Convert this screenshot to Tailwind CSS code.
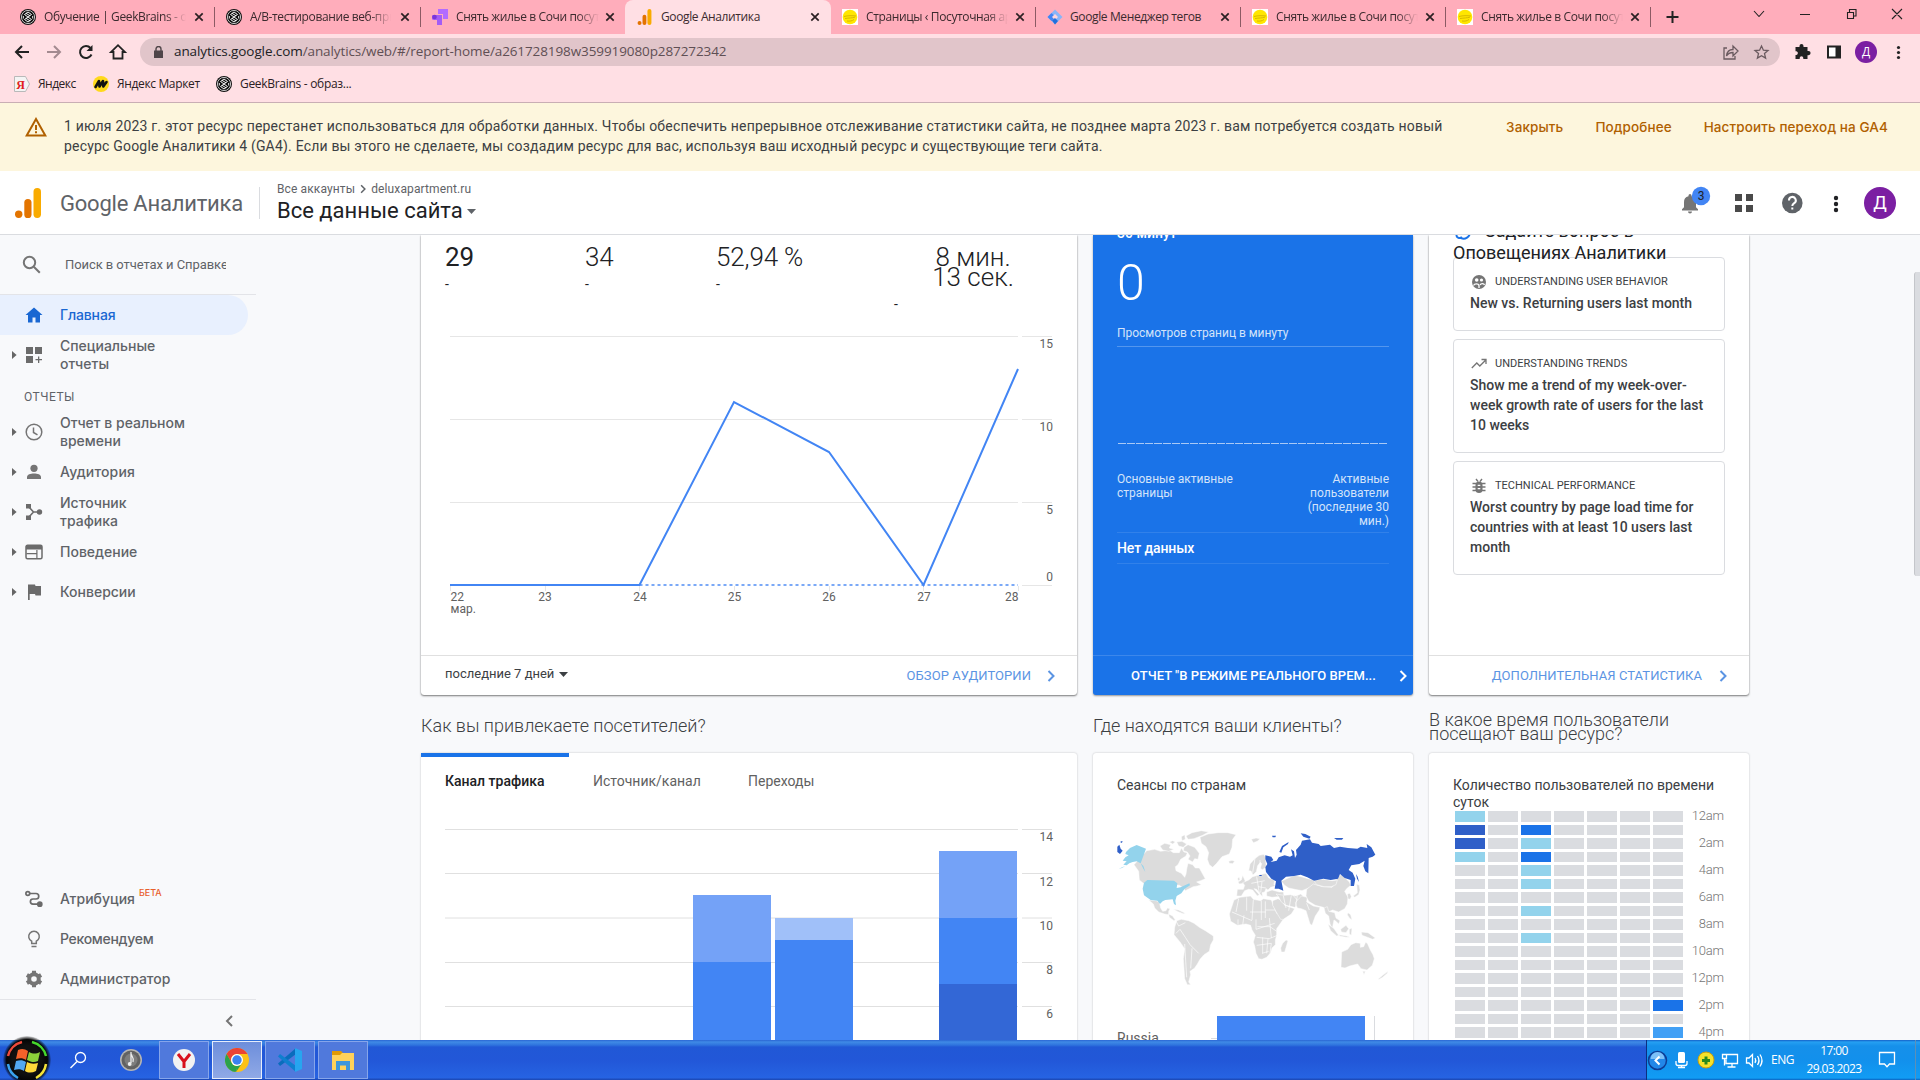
<!DOCTYPE html>
<html lang="ru">
<head>
<meta charset="utf-8">
<title>Google Аналитика</title>
<script src="https://cdn.jsdelivr.net/npm/@tailwindcss/browser@4"></script>
</head>
<body class="w-[1920px] h-[1080px] overflow-hidden flex flex-col bg-[#f8f9fb] font-['Roboto',sans-serif] text-[#202124]">

<!-- Shared icons -->
<svg width="0" height="0" class="absolute">
  <defs>
    <symbol id="gb" viewBox="0 0 16 16"><circle cx="8" cy="8" r="8" fill="#111"/><circle cx="8" cy="8" r="6.600" fill="none" stroke="#eee" stroke-width=".8"/><g fill="none" stroke="#f4f4f4" stroke-width="1"><path d="M8 3 4.500 5.500 8 8l-3.500 2.500L8 13M8 3l3.500 2.500L8 8l3.500 2.500L8 13M6 4.300l4 2.500M6 9.300l4 2.500M3.300 7v2.500M12.700 7v2.500"/></g></symbol>
    <symbol id="deluxe" viewBox="0 0 16 16"><path fill="#fff" d="M0 0h16v16H0z"/><circle cx="8" cy="8" r="7.300" fill="#ffe600"/><path d="M2 7.500c4-1 8-1 12-.5M3 9.500c4-.6 7-.4 10-1.400M5 12c3 .4 5 0 7-1.500" stroke="#d8b800" stroke-width="1" fill="none"/></symbol>
    <symbol id="x" viewBox="0 0 10 10"><path d="m1.300 1.300 7.400 7.400m0-7.400-7.400 7.400" stroke="#2b2023" stroke-width="1.700" fill="none"/></symbol>
    <symbol id="ga" viewBox="0 0 26 30"><rect x="18.500" y="0" width="7.500" height="30" rx="3.700" fill="#f9ab00"/><rect x="9.300" y="11" width="7.200" height="19" rx="3.600" fill="#e37400"/><circle cx="3.700" cy="26.200" r="3.700" fill="#e37400"/></symbol>
    <symbol id="arr" viewBox="0 0 5 8"><path d="M0 0v8l4.600-4z" fill="#666"/></symbol>
    <symbol id="chev" viewBox="0 0 8 12"><path d="m1.500 1 5 5-5 5" fill="none" stroke="currentColor" stroke-width="2"/></symbol>
  </defs>
</svg>

<!-- Tab strip -->
<header class="h-[34px] shrink-0 bg-[#ffadbb] flex text-[12px] leading-[34px] text-[#3b2a2e] font-['Open_Sans',sans-serif] tracking-[-0.38px] whitespace-nowrap">
  <div class="w-[215px] pl-5 flex items-center"><svg class="size-4 shrink-0"><use href="#gb"/></svg><span class="ml-2 w-[142px] overflow-hidden [mask-image:linear-gradient(to_right,#000_85%,transparent)]">Обучение | GeekBrains - обра</span><svg class="size-[10px] ml-2 shrink-0"><use href="#x"/></svg><i class="ml-auto w-px h-5 bg-[#8c5a64]"></i></div>
  <div class="w-[206px] pl-[11px] flex items-center"><svg class="size-4 shrink-0"><use href="#gb"/></svg><span class="ml-2 w-[141px] overflow-hidden [mask-image:linear-gradient(to_right,#000_85%,transparent)]">A/B-тестирование веб-прило</span><svg class="size-[10px] ml-[9px] shrink-0"><use href="#x"/></svg><i class="ml-auto w-px h-5 bg-[#8c5a64]"></i></div>
  <div class="w-[204px] pl-[11px] flex items-center bg-[#ffadbb]"><svg class="size-4 shrink-0" viewBox="0 0 16 16"><path d="M6 0h10v10h-5V5H6z" fill="#b36bff"/><path d="M4 6h6v10H5v-5H2A2.500 2.500 0 0 1 2 6z" fill="#a35cf5"/><circle cx="2.500" cy="8" r="2.300" fill="#7a35d8"/></svg><span class="ml-2 w-[143px] overflow-hidden [mask-image:linear-gradient(to_right,#000_85%,transparent)]">Снять жилье в Сочи посуточ</span><svg class="size-[10px] ml-[6px] shrink-0"><use href="#x"/></svg></div>
  <div class="w-[206px] flex bg-[#ffdfe4] rounded-t-[8px]"><div class="pl-3 w-full flex items-center"><svg class="w-[15px] h-4 shrink-0"><use href="#ga"/></svg><span class="ml-[9px] w-[145px]">Google Аналитика</span><svg class="size-[10px] ml-[4px] shrink-0"><use href="#x"/></svg></div></div>
  <div class="w-[205px] pl-[11px] flex items-center rounded-bl-[8px]"><svg class="size-4 shrink-0"><use href="#deluxe"/></svg><span class="ml-2 w-[142px] overflow-hidden [mask-image:linear-gradient(to_right,#000_85%,transparent)]">Страницы ‹ Посуточная аренда</span><svg class="size-[10px] ml-[7px] shrink-0"><use href="#x"/></svg><i class="ml-auto w-px h-5 bg-[#8c5a64]"></i></div>
  <div class="w-[205px] pl-[11px] flex items-center"><svg class="size-4 shrink-0" viewBox="0 0 16 16"><path d="M8 .5 15.500 8 8 15.500.5 8z" fill="#8ab4f8"/><path d="M8 .5.5 8 4.500 12l4-4-4-4z" fill="#4285f4"/><path d="m8 5 3 3-3 3-3-3z" fill="#ffd5dc"/><path d="m5 11.500 3-2.500 3 3-3 3.500z" fill="#246fdb"/></svg><span class="ml-[7px] w-[143px]">Google Менеджер тегов</span><svg class="size-[10px] ml-[7px] shrink-0"><use href="#x"/></svg><i class="ml-auto w-px h-5 bg-[#8c5a64]"></i></div>
  <div class="w-[205px] pl-[11px] flex items-center"><svg class="size-4 shrink-0"><use href="#deluxe"/></svg><span class="ml-2 w-[142px] overflow-hidden [mask-image:linear-gradient(to_right,#000_85%,transparent)]">Снять жилье в Сочи посуточ</span><svg class="size-[10px] ml-[7px] shrink-0"><use href="#x"/></svg><i class="ml-auto w-px h-5 bg-[#8c5a64]"></i></div>
  <div class="w-[205px] pl-[11px] flex items-center"><svg class="size-4 shrink-0"><use href="#deluxe"/></svg><span class="ml-2 w-[142px] overflow-hidden [mask-image:linear-gradient(to_right,#000_85%,transparent)]">Снять жилье в Сочи посуточ</span><svg class="size-[10px] ml-[7px] shrink-0"><use href="#x"/></svg><i class="ml-auto w-px h-5 bg-[#8c5a64]"></i></div>
  <svg class="w-[269px] h-[34px]" viewBox="1651 0 269 34" fill="none" stroke="#222"><path d="M1666.500 17h12M1672.500 11v12" stroke-width="2"/><path d="m1754 11 5 5.500 5-5.500M1800 14.500h10M1847.500 12.500h6v6h-6zM1849.500 12.500v-3h6.500v6.500h-2.500M1892 9l10 10m0-10-10 10" stroke-width="1.100"/></svg>
</header>

<!-- Toolbar -->
<div class="h-[36px] shrink-0 bg-[#ffdfe4] flex items-center font-['Open_Sans',sans-serif]">
  <svg class="w-[140px] h-9" viewBox="0 34 140 36" fill="none" stroke="#222" stroke-width="2"><path d="M29 52H16.500m5.500-6-6 6 6 6"/><path d="M47 52h12.500m-5.500-6 6 6-6 6" stroke="#a38a90"/><path d="M91.500 54.500A6 6 0 1 1 90.500 48"/><path d="M92.500 45v6h-6z" fill="#222" stroke="none"/><path d="M113.500 58.500v-6.500H111l7-6.800 7 6.800h-2.500v6.500z" stroke-width="1.800"/></svg>
  <div class="w-[1640px] h-7 rounded-full bg-[#e1c5ca] flex items-center text-[#5f4f54] whitespace-nowrap">
    <svg class="w-[9px] h-[12px] ml-[14px] -mt-px" viewBox="0 0 9 12"><path d="M0 4.500h9V12H0z" fill="#4f4549"/><path d="M2 5V3a2.500 2.500 0 0 1 5 0v2" fill="none" stroke="#4f4549" stroke-width="1.400"/></svg>
    <span class="ml-[11px] text-[13.500px] leading-5 -mt-[2px] tracking-[-0.1px]"><span class="text-[#202124]">analytics.google.com</span>/analytics/web/#/report-home/a261728198w359919080p287272342</span>
    <svg class="w-[60px] h-7 ml-auto" viewBox="1720 38 60 28" fill="none" stroke="#6a5a5f" stroke-width="1.300"><path d="M1727 48h-3v11h11v-3M1726.500 56c.5-4.500 3-6.500 6.500-6.500V46l5 5-5 5v-3.500c-3 0-5 1-6.500 3.500z"/><path d="m1761.500 46 1.900 4.200 4.600.4-3.500 3 1.100 4.500-4.100-2.400-4.100 2.400 1.100-4.500-3.500-3 4.600-.4z"/></svg>
  </div>
  <svg class="w-[140px] h-9" viewBox="1780 34 140 36"><path d="M1795 48h4v-1a2 2 0 0 1 4 0v1h4v4h1a2 2 0 0 1 0 4.200h-1v3.800h-4.200v-1a1.800 1.800 0 0 0-3.600 0v1h-4.200v-4h1a2 2 0 0 0 0-3.800h-1z" fill="#222" transform="translate(.5 -1)"/><path d="M1828 46.500h12v11h-12z" fill="#fff" stroke="#222" stroke-width="2"/><path d="M1835.500 46.500h4.500v11h-4.500z" fill="#222"/><circle cx="1866" cy="52" r="11" fill="#7b1fa2"/><text x="1866" y="56" text-anchor="middle" font-size="12" fill="#fff">Д</text><g fill="#222"><circle cx="1898.500" cy="47.500" r="1.600"/><circle cx="1898.500" cy="52.500" r="1.600"/><circle cx="1898.500" cy="57.500" r="1.600"/></g></svg>
</div>

<!-- Bookmarks -->
<div class="h-[33px] pb-[5px] shrink-0 bg-[#ffdfe4] border-b border-[#c9aeb4] flex items-center pl-[14px] text-[12px] text-[#2b2023] font-['Open_Sans',sans-serif] tracking-[-0.35px] whitespace-nowrap">
  <svg class="w-[16px] h-4" viewBox="0 0 16 16"><path d="M.5.5h11l4 7.500-4 7.500H.5z" fill="#f4f4f4" stroke="#b9b9b9"/><text x="6.500" y="12.500" text-anchor="middle" font-size="12" font-weight="700" fill="#e02020" font-family="Liberation Serif, serif">Я</text></svg><span class="ml-2 w-[55px] tracking-[-0.5px]">Яндекс</span>
  <svg class="size-4" viewBox="0 0 16 16"><circle cx="8" cy="8" r="8" fill="#ffd91c"/><path d="M2.500 11 6 5l.5 5.500L10 5l.3 5.500L13.500 6" stroke="#111" stroke-width="2.600" stroke-linecap="round" stroke-linejoin="round" fill="none"/></svg><span class="ml-2 w-[99px]">Яндекс Маркет</span>
  <svg class="size-4"><use href="#gb"/></svg><span class="ml-2 tracking-[-0.3px]">GeekBrains - образ...</span>
</div>

<!-- Notice banner -->
<section class="h-[68px] shrink-0 bg-[#fdf6dd] flex pl-[25px] pr-8">
  <svg class="w-[22px] h-5 mt-[14px]" viewBox="0 0 22 20"><path d="M11 2 20.300 18.500H1.700z" fill="none" stroke="#b06000" stroke-width="2"/><path d="M10 8h2v5h-2zM10 14.300h2v2h-2z" fill="#b06000"/></svg>
  <p class="ml-[17px] mt-[13px] text-[14px] leading-5 tracking-[0.195px] text-[#3c4043] whitespace-nowrap">1 июля 2023 г. этот ресурс перестанет использоваться для обработки данных. Чтобы обеспечить непрерывное отслеживание статистики сайта, не позднее марта 2023 г. вам потребуется создать новый<br>ресурс Google Аналитики 4 (GA4). Если вы этого не сделаете, мы создадим ресурс для вас, используя ваш исходный ресурс и существующие теги сайта.</p>
  <div class="ml-auto mt-[14px] flex gap-8 text-[13.500px] leading-5 tracking-[0.1px] text-[#b06000] font-medium font-['Inter',sans-serif] whitespace-nowrap"><span>Закрыть</span><span>Подробнее</span><span>Настроить переход на GA4</span></div>
</section>

<!-- App bar -->
<section class="h-[64px] shrink-0 bg-white border-b border-[#dadce0] flex items-center pl-[15px] pr-6">
  <svg class="w-[26px] h-[30px]"><use href="#ga"/></svg>
  <div class="ml-[19px] mt-0.5 w-[199px] text-[22px] leading-[30px] text-[#5f6368] tracking-[-0.22px] whitespace-nowrap">Google Аналитика</div>
  <div class="w-px h-8 bg-[#dadce0]"></div>
  <div class="ml-[17px]">
    <div class="flex items-center text-[12px] leading-4 text-[#5f6368] tracking-[0.12px]"><span>Все аккаунты</span><svg class="w-[6px] h-[10px] mx-[5px]"><use href="#chev"/></svg><span>deluxapartment.ru</span></div>
    <div class="flex items-center text-[22px] leading-[26px] mt-px"><span>Все данные сайта</span><svg class="w-[9px] h-[5px] ml-[4px]" viewBox="0 0 9 5"><path d="M0 0h9L4.500 5z" fill="#5f6368"/></svg></div>
  </div>
  <svg class="w-[240px] h-[63px] ml-auto -mr-6" viewBox="1680 171 240 63"><path d="M1682 210.500v-1.300l2-2v-5a6 6 0 0 1 4.500-6v-.7a1.500 1.500 0 0 1 3 0v.7a6 6 0 0 1 4.500 6v5l2 2v1.300zM1688 211.500h4a2 2 0 0 1-4 0z" fill="#757575"/><circle cx="1701" cy="196" r="9.200" fill="#4285f4"/><text x="1701" y="200.300" text-anchor="middle" font-size="12" fill="#202124">3</text><path d="M1735 194h7v7h-7zM1746 194h7v7h-7zM1735 205h7v7h-7zM1746 205h7v7h-7z" fill="#4a4a4a"/><circle cx="1792.300" cy="203" r="10.300" fill="#5f6368"/><path d="M1789 200.500a3.400 3.400 0 1 1 5.200 2.700c-1.200.8-1.900 1.300-1.900 2.800" fill="none" stroke="#fff" stroke-width="2"/><path d="M1791.300 207.500h2v2h-2z" fill="#fff"/><g fill="#202124"><circle cx="1836" cy="198" r="2.200"/><circle cx="1836" cy="204" r="2.200"/><circle cx="1836" cy="210" r="2.200"/></g><circle cx="1880" cy="203" r="16" fill="#7b1fa2"/><text x="1880" y="209" text-anchor="middle" font-size="18" fill="#fff">Д</text></svg>
</section>

<!-- Body -->
<div class="h-[805px] shrink-0 flex overflow-hidden">
  <!-- Sidebar -->
  <nav class="w-[256px] flex flex-col text-[14px] leading-[18px] font-medium text-[#5f6368] font-['Inter',sans-serif]">
    <div class="h-[60px] border-b border-[#e3e4e8] flex items-center pl-[22px]">
      <svg class="size-[19px]" viewBox="0 0 19 19" fill="none" stroke="#757575" stroke-width="2"><circle cx="7.500" cy="7.500" r="5.700"/><path d="m11.800 11.800 6 6"/></svg>
      <span class="ml-6 w-[161px] overflow-hidden whitespace-nowrap text-[13px] font-normal tracking-[-0.07px] font-['Roboto',sans-serif]">Поиск в отчетах и Справке</span>
    </div>
    <div class="h-10 w-[248px] bg-[#e8f0fe] rounded-r-full flex items-center pl-[25px] text-[#1967d2] tracking-[-0.15px]"><svg class="size-[18px]" viewBox="0 0 18 18"><path d="M9 1.500.5 9H3v7.500h4.500v-5h3v5H15V9h2.500z" fill="#1967d2"/></svg><span class="ml-[17px]">Главная</span></div>
    <div class="h-10 flex items-center pl-3"><svg class="w-[5px] h-2"><use href="#arr"/></svg><svg class="size-[18px] ml-2" viewBox="0 0 18 18"><path d="M1 1h7v7H1zM10 1h7v7h-7zM1 10h7v7H1zM13 10.500h1.300V13H17v1.300h-2.700V17H13v-2.700h-2.500V13H13z" fill="#6b6b6b"/></svg><span class="ml-[17px] w-[130px]">Специальные отчеты</span></div>
    <div class="h-[37px] pl-6 pt-[13px] text-[12px] font-normal tracking-[0.5px] font-['Roboto',sans-serif]">ОТЧЕТЫ</div>
    <div class="h-10 flex items-center pl-3"><svg class="w-[5px] h-2"><use href="#arr"/></svg><svg class="size-[18px] ml-2" viewBox="0 0 18 18" fill="none" stroke="#757575" stroke-width="1.500"><circle cx="9" cy="9" r="7.800"/><path d="M8.500 4.500v5l4 2.300"/></svg><span class="ml-[17px] w-[130px]">Отчет в реальном времени</span></div>
    <div class="h-10 flex items-center pl-3"><svg class="w-[5px] h-2"><use href="#arr"/></svg><svg class="size-[18px] ml-2" viewBox="0 0 18 18" fill="#757575"><circle cx="9" cy="5.300" r="3.600"/><path d="M2 16v-2c0-2.500 3.500-3.500 7-3.500s7 1 7 3.500v2z"/></svg><span class="ml-[17px] tracking-[0.15px]">Аудитория</span></div>
    <div class="h-10 flex items-center pl-3"><svg class="w-[5px] h-2"><use href="#arr"/></svg><svg class="size-[18px] ml-2" viewBox="0 0 18 18" fill="#6b6b6b"><path d="M1 1h5v4.500H1zM1 12.500h5V17H1z"/><circle cx="14.500" cy="9" r="2.700"/><path d="m3.500 3.500 5 5.500-5 5.500M8.500 9h6" fill="none" stroke="#6b6b6b" stroke-width="1.600"/></svg><span class="ml-[17px] w-[100px]">Источник трафика</span></div>
    <div class="h-10 flex items-center pl-3"><svg class="w-[5px] h-2"><use href="#arr"/></svg><svg class="size-[18px] ml-2" viewBox="0 0 18 18"><rect x="1" y="2.300" width="16" height="13.400" rx="1.500" fill="none" stroke="#6b6b6b" stroke-width="1.500"/><path d="M1 2h16v4.500H1zM1.500 10h10v1.300h-10zM11.300 7h1.200v8.500h-1.200z" fill="#6b6b6b"/></svg><span class="ml-[17px]">Поведение</span></div>
    <div class="h-10 flex items-center pl-3"><svg class="w-[5px] h-2"><use href="#arr"/></svg><svg class="size-[18px] ml-2" viewBox="0 0 18 18"><path d="M3 1.500h7l.5 1.500H16v9.500h-5.500L10 11H4.700v6H3z" fill="#6b6b6b"/></svg><span class="ml-[17px]">Конверсии</span></div>

    <div class="mt-auto h-10 flex items-center pl-[25px]"><svg class="size-[18px]" viewBox="0 0 18 18" fill="none" stroke="#6b6b6b" stroke-width="1.700"><circle cx="2.800" cy="3.500" r="1.900"/><path d="M5 3.500h6a2.700 2.700 0 0 1 0 5.500H8a2.600 2.600 0 0 0 0 5.200h5"/><circle cx="14.800" cy="14.200" r="2" fill="#6b6b6b"/></svg><span class="ml-[17px]">Атрибуция</span><span class="ml-1 -mt-[12px] text-[9px] leading-3 font-medium text-[#e8602c]">БЕТА</span></div>
    <div class="h-10 flex items-center pl-[25px]"><svg class="size-[18px]" viewBox="0 0 18 18" fill="none" stroke="#757575" stroke-width="1.500"><path d="M6.700 13.500v-2.200A5.300 5.300 0 1 1 11.300 11.300v2.200zM6.500 16.500h5"/></svg><span class="ml-[17px] tracking-[-0.3px]">Рекомендуем</span></div>
    <div class="h-10 flex items-center pl-[25px]"><svg class="size-[18px]" viewBox="0 0 18 18"><circle cx="9" cy="9" r="4.800" fill="none" stroke="#757575" stroke-width="4"/><path d="M7 .8h4v3H7zM7 14.200h4v3H7z" fill="#757575"/><path d="M7 .8h4v3H7zM7 14.200h4v3H7z" fill="#757575" transform="rotate(60 9 9)"/><path d="M7 .8h4v3H7zM7 14.200h4v3H7z" fill="#757575" transform="rotate(120 9 9)"/></svg><span class="ml-[17px]">Администратор</span></div>
    <div class="h-[41px] border-t border-[#e3e4e8] flex items-center pl-[225px]"><svg class="w-[8px] h-[12px] mt-0.5" viewBox="0 0 8 12"><path d="M7 1 2 6l5 5" fill="none" stroke="#757575" stroke-width="2"/></svg></div>
  </nav>

  <!-- Report home -->
  <main class="ml-[165px] w-[1328px] shrink-0">
    <div class="flex gap-4 h-[460px]">
      <section class="w-[656px] bg-white rounded-b-[3px] shadow-[0_1px_2px_rgba(0,0,0,.5),0_0_1px_rgba(0,0,0,.3)] flex flex-col">
        <div class="pt-3 h-[92px] pl-6 flex text-[26px] leading-5 font-light">
          <div class="w-[140px]"><div class="font-normal tracking-[-0.2px]">29</div><div class="mt-[9px] text-[14px] leading-4 font-normal">-</div></div>
          <div class="w-[131px]"><div class="tracking-[-0.2px]">34</div><div class="mt-[9px] text-[14px] leading-4 font-normal">-</div></div>
          <div class="w-[178px]"><div class="tracking-[-0.15px]">52,94 %</div><div class="mt-[9px] text-[14px] leading-4 font-normal">-</div></div>
          <div class="w-[158px]"><div class="text-center">8 мин.<br>13 сек.</div><div class="mt-[9px] text-[14px] leading-4 font-normal">-</div></div>
        </div>
        <svg class="w-[656px] h-[328px]" viewBox="421 327 656 328" font-size="12" fill="#616161">
          <path d="M450 336.500h568M1022 336.500h30M450 419.500h568M1022 419.500h30M450 502.500h568M1022 502.500h30M1022 585.500h30M450.500 586v5M545.500 586v5M639.500 586v5M734.500 586v5M829.500 586v5M923.500 586v5M1018.500 586v5" stroke="#e6e6e6"/>
          <path d="M639.500 585H1018" stroke="#4285f4" stroke-opacity=".7" stroke-width="2" stroke-dasharray="3 3"/>
          <path d="M450 585h189.500L734 402l95 50 94.500 133L1018 369" fill="none" stroke="#4285f4" stroke-width="2"/>
          <g text-anchor="end"><text x="1053" y="348">15</text><text x="1053" y="431">10</text><text x="1053" y="514">5</text><text x="1053" y="581">0</text><text x="1018.500" y="601">28</text></g>
          <text x="450.500" y="601">22</text><text x="450.500" y="613">мар.</text>
          <g text-anchor="middle"><text x="545" y="601">23</text><text x="640" y="601">24</text><text x="734.500" y="601">25</text><text x="829" y="601">26</text><text x="924" y="601">27</text></g>
        </svg>
        <div class="h-10 border-t border-[#e0e0e0] flex items-center justify-between pl-6 pr-[22px]">
          <span class="flex items-center text-[13px] text-[#3c4043] -mt-[3px]">последние 7 дней<svg class="w-[9px] h-[5px] ml-[5px]" viewBox="0 0 9 5"><path d="M0 0h9L4.500 5z" fill="#3c4043"/></svg></span>
          <span class="flex items-center text-[13px] text-[#5b94e3] tracking-[0.06px]">ОБЗОР АУДИТОРИИ<svg class="w-[8px] h-[12px] ml-[16px]"><use href="#chev"/></svg></span>
        </div>
      </section>

      <section class="w-[320px] bg-[#1a73e8] rounded-b-[3px] shadow-[0_1px_2px_rgba(0,0,0,.4)] flex flex-col text-white">
        <div class="h-[420px] px-6 flex flex-col">
          <div class="h-4 -mt-[10px] text-[14px] leading-4 font-medium">30 минут</div>
          <div class="mt-[14px] h-[56px] text-[50px] leading-[56px] font-light">0</div>
          <div class="mt-[16px] h-[20px] border-b border-white/25 text-[12px] leading-3 text-[#d3e3fa] tracking-[-0.03px]">Просмотров страниц в минуту</div>
          <svg class="w-[272px] h-[97px] shrink-0" viewBox="1117 346 272 97"><path d="M1118 442.500h270" stroke="#a9c9f5" stroke-dasharray="8 1"/></svg>
          <div class="mt-[28px] h-[61px] border-b border-white/10 flex justify-between text-[12px] leading-[14px] text-[#d3e3fa]"><div class="w-[130px]">Основные активные страницы</div><div class="w-[90px] text-right">Активные пользователи (последние 30 мин.)</div></div>
          <div class="h-[31px] border-b border-white/10 text-[14px] leading-[30px] font-medium tracking-[-0.1px]">Нет данных</div>
        </div>
        <div class="h-10 border-t border-white/15 flex items-center pl-[38px] text-[13px] font-medium whitespace-nowrap tracking-[0.04px]"><span class="w-[268px]">ОТЧЕТ "В РЕЖИМЕ РЕАЛЬНОГО ВРЕМ...</span><svg class="w-[8px] h-[12px]"><use href="#chev"/></svg></div>
      </section>

      <section class="w-[320px] bg-white rounded-b-[3px] shadow-[0_1px_2px_rgba(0,0,0,.5),0_0_1px_rgba(0,0,0,.3)] flex flex-col">
        <div class="h-[420px] px-6">
          <div class="-mt-[15px] flex items-center text-[18px] leading-[22px]"><svg class="w-[22px] h-[18px] ml-px mr-[9px]" viewBox="0 0 22 18"><path d="M3 11c-2 5 3 6 5 4M7 16c4 2 9-1 9-6" fill="none" stroke="#1a73e8" stroke-width="2"/><circle cx="3" cy="11" r="1.500" fill="#1a73e8"/></svg><span>Задайте вопрос в</span></div>
          <div class="relative z-10 mt-px text-[18px] leading-[20px] whitespace-nowrap">Оповещениях Аналитики</div>
          <div class="-mt-[6px] w-[272px] h-[74px] border border-[#dadce0] rounded-[4px] px-4 pt-[15px]">
            <div class="flex items-center h-[18px] text-[11px] text-[#3c4043]"><svg class="size-4 mr-2 ml-px" viewBox="0 0 16 16"><circle cx="8" cy="8" r="7" fill="#757575"/><circle cx="5.700" cy="6" r="1.800" fill="#fff"/><circle cx="10.500" cy="6" r="1.600" fill="#fff"/><path d="M2.500 11.500c1-2.200 5-2.200 5.500 0v2.500M9 11c1-2 4-1.800 4.500 0" fill="none" stroke="#fff" stroke-width="1.300"/></svg>UNDERSTANDING USER BEHAVIOR</div>
            <div class="mt-[2px] text-[14px] leading-5 font-medium text-[#3c4043] whitespace-nowrap">New vs. Returning users last month</div>
          </div>
          <div class="mt-2 w-[272px] h-[114px] border border-[#dadce0] rounded-[4px] px-4 pt-[15px]">
            <div class="flex items-center h-[18px] text-[11px] text-[#3c4043]"><svg class="size-4 mr-2 ml-px" viewBox="0 0 16 16"><path d="m.8 12 5-5 3 3 5.500-5.500M10.500 3.500H15V8" fill="none" stroke="#757575" stroke-width="1.300"/></svg>UNDERSTANDING TRENDS</div>
            <div class="mt-[2px] text-[14px] leading-5 font-medium text-[#3c4043] whitespace-nowrap">Show me a trend of my week-over-<br>week growth rate of users for the last<br>10 weeks</div>
          </div>
          <div class="mt-2 w-[272px] h-[114px] border border-[#dadce0] rounded-[4px] px-4 pt-[15px]">
            <div class="flex items-center h-[18px] text-[11px] text-[#3c4043]"><svg class="size-4 mr-2 ml-px" viewBox="0 0 16 16"><rect x="4.500" y="3.500" width="7" height="11.500" rx="3.500" fill="#757575"/><path d="M1.500 5.500h13M1.500 9h13M1.500 12.500h13M5 1l2 2.500M11 1 9 3.500" stroke="#757575" stroke-width="1.400"/><path d="M6.700 7.300h2.600M6.700 10.700h2.600" stroke="#fff" stroke-width="1.200"/></svg>TECHNICAL PERFORMANCE</div>
            <div class="mt-[2px] text-[14px] leading-5 font-medium text-[#3c4043] whitespace-nowrap">Worst country by page load time for<br>countries with at least 10 users last<br>month</div>
          </div>
        </div>
        <div class="h-10 border-t border-[#e0e0e0] flex items-center justify-end pr-[22px] text-[13px] text-[#5b94e3] tracking-[0.07px]">ДОПОЛНИТЕЛЬНАЯ СТАТИСТИКА<svg class="w-[8px] h-[12px] ml-[17px]"><use href="#chev"/></svg></div>
      </section>
    </div>

    <div class="flex gap-4 h-[58px] items-center text-[18px] font-light text-[#3c4043]">
      <h2 class="w-[656px] pt-0.5">Как вы привлекаете посетителей?</h2>
      <h2 class="w-[320px] pt-0.5">Где находятся ваши клиенты?</h2>
      <h2 class="w-[320px] pt-1.5 leading-[14px]">В какое время пользователи<br>посещают ваш ресурс?</h2>
    </div>

    <div class="flex gap-4 h-[500px]">
      <section class="w-[656px] bg-white rounded-t-[3px] shadow-[0_0_2px_rgba(0,0,0,.25)]">
        <div class="flex h-[54px] text-[14px] leading-[48px] text-[#616161]">
          <div class="w-[148px] pl-6 border-t-4 border-[#1a73e8] text-[#202124] font-medium whitespace-nowrap h-[54px]">Канал трафика</div>
          <div class="ml-6 pt-1 w-[131px]">Источник/канал</div>
          <div class="ml-6 pt-1">Переходы</div>
        </div>
        <svg class="w-[656px] h-[273px]" viewBox="421 807 656 273" font-size="12" fill="#616161">
          <path d="M445 829.500h573M1022 829.500h30M445 873.500h573M1022 873.500h30M445 918h573M1022 918h30M445 962.500h573M1022 962.500h30M445 1006.500h573M1022 1006.500h30" stroke="#e0e0e0"/>
          <path d="M693 895h78v67h-78zM939 851h78v67h-78z" fill="#74a2f7"/><path d="M775 918h78v22h-78z" fill="#a0c0f9"/><path d="M693 962h78v118h-78zM775 940h78v140h-78zM939 918h78v66h-78z" fill="#4285f4"/><path d="M939 984h78v96h-78z" fill="#3367d6"/>
          <g text-anchor="end"><text x="1053" y="841">14</text><text x="1053" y="885.500">12</text><text x="1053" y="930">10</text><text x="1053" y="974">8</text><text x="1053" y="1018">6</text></g>
        </svg>
      </section>

      <section class="w-[320px] bg-white rounded-t-[3px] shadow-[0_0_2px_rgba(0,0,0,.25)]">
        <h3 class="pl-6 pt-6 h-[67px] text-[14px] leading-[17px] text-[#3c4043]">Сеансы по странам</h3>
        <svg class="ml-[17px] w-[290px] h-[196px]" viewBox="0 0 870 588">
          <g fill="#dcdcdc" stroke="#fff" stroke-width="1.500" stroke-linejoin="round">
            <path d="M110 92l24-4 18 6 26-4 12 8 18 0 6-14 8 12 10 2-4 10-16 10-8 16-8 6 2 12 16 8 10 12 4-10 2-14 4-18 14 4 8 10 12 0 12 22 6 10-14 6-12 4 14 8-12 4-12 2-8 4-16 8-6-8-12-8-20-2-88-4-12-10-2-26-14-20z"/>
            <path d="M150 78l14-8 18 4-4 10 14 4-16 6-18-4zM178 66l10-4 8 4-8 6zM200 66l16-2 14 8-10 10-14-4zM228 48l18-10 28-6 22 4-18 10-26 10-18 2zM222 82l12-8 20 8 14 18-4 18-10-2-6 10-14-8 6-10-8-12-12-4zM214 50l10-6 2 14-10 4z"/>
            <path d="M270 52l24-10 30-4 30 0 24 6-10 14-2 24-8 20-22 8-16 20-12 12-10-8-6-16 4-20-8-18-14-10z"/>
            <path d="M356 124l10-3 8 3-6 7-10-1zM424 58l14-4 12 2-8 8-12 4z"/>
            <path d="M416 152l4-20 14-16 14-10 14-3 4 8 3 30-12 8-6-4 4-14-4-4-8 10-4 18-10 10-6-12z"/>
            <path d="M384 186l10-6 4-14 8 18-4 6-14 2zM383 174l5-2 2 8-6 2z"/>
            <path d="M382 208l18 0 4-12-6-8 18-8 12-10 16-4 14-4 10-2 8 14 18 6-2 14 4 4-14 4-8 8-6-4-4 10-8 2 2 12-6-6-12-16-8-2 16 18-6 4-14-18-12-2-12 4-10 16-14 0z"/>
            <path d="M470 216l16-6 22 6 12 0 2 10-20 4-16 2-16-4z"/>
            <path d="M372 240l18-8 32-4 8 10 22 4 8-6 24 4 6 16 10 24 20 8 4 4-14 20-10 14 0 20-4 14 0 14-10 10-4 14-12 14-14 6-10-2-8-16-4-22-4-12 6-20-10-16-4-14-14-4-26 4-20-12-4-22 6-18z"/>
            <path d="M528 360l6 2-4 14-6 20-10 0-2-12 6-14zM488 242l16-6 12 6 8 14 30 10-10 16-24 16-8 0-12-20-12-22z"/>
            <path d="M498 222l24 4 20-2 16 4 14-6 10 8-6 14-4 10-18 8-26-6-14-10-8-16z"/>
            <path d="M514 184l16-8 24-10 20 4 20 6 24 6 8 8-10 12-20 2-20 8-22-4-18-4-12-8z"/>
            <path d="M556 248l18-20 18 4-2 14 20 12 20 4-2 8-12 18-10 28-6-4-12-40-14-6-12-2z"/>
            <path d="M590 208l20-16 28 8 28 2 12-14 0-20 18-4 22 22 4 10-12 10-6 8 10 18-2 20-8 14-18 10-18-6-14 6-14-14-24-6-20-12-8-16z"/>
            <path d="M610 180l30-2 26 4 16-2-4 14-14 6-22 0-22-6z"/>
            <path d="M642 264l10-4 4 14 18 4 4 16 12 8-4 10-8-8-6-4-4 20 8 12-6 0-10-20-4-24-10-8zM740 192l8 4 2 14-4 14-12 8-4-4 12-10zM712 222l8-2 4 10-4 8-6-2z"/>
            <path d="M654 312l18 14 14 20-6 2-18-16zM688 344l22 4 10 4-12 0-20-4zM692 328l16-12 8 10-8 12-14-2zM718 328l8-4-2 22-6-4zM714 278l8 6 4 16-8-6-6-10zM754 336l20 2 22 16-8 4-20-8-12-4z"/>
            <path d="M695 396l18-8 10-14 14-6 14 2 0 12 10-2 6-14 6 6 8 18 8 14 4 12-6 20-16 14-18-4-10-14-24 6-14 6-12-2zM758 454l8 0-4 10zM804 478l14-12 16-12-2 6-14 12-10 6z"/>
            <path d="M116 240l22 2 10 4 4 18 6 10 10-2 4-8 8 2-4 8 0 10-12-2-18-6-12-12-4-12zM176 282l12 6 8 12-4 2-14-10zM190 268l16 2 20 10-6 1-16-6z"/>
            <path d="M200 302l14-4 22 4 16 8 16 12 18 10 24 16 0 12-8 14-4 20-16 10-12 14-8 14-8 12-14 10 2 10-6 22 6 8-10 0-8-18-4-60 4-30-14-20-18-22 2-22z"/>
          </g>
          <path d="M196 300l10 18 20-10M198 340l12-12 16 24M226 352l14 22 26 26M224 372l6 100M246 385l-4 60M386 236l-8 40M410 232l0 40M430 240l-4 60M366 276l60 26M384 298l0 16M402 286l-4 30M438 298l0 30 56-18M466 244l0 50M454 242l0 58M466 270l30 0M478 294l6 60M442 320l38 0 20 14M440 352l38 4 24-10M458 352l0 48M440 376l44-6M474 356l-4 44M456 400l20-6M484 370l-4 30M420 276l48 0M440 170l8 50M424 190l40-8M444 200l24 4M456 184l-4 34M436 108l-8 50M450 120l0 34M520 228l8 36M544 226l-8 46M562 228l-6 36M528 208l60 8M540 216l22 24M590 250l8 20" fill="none" stroke="#fff" stroke-width="2"/>
          <path d="M466 106L484 110 490 120 482 126 500 122 506 112 524 106 540 110 548 106 543 88 552 94 555 114 560 104 558 90 572 74 576 62 600 58 606 68 626 72 632 78 660 74 672 84 690 80 714 84 742 86 752 80 772 84 770 72 784 82 796 104 788 110 776 114 775 160 766 154 760 138 764 122 748 132 724 136 716 150 728 158 736 176 732 198 722 198 722 180 704 174 690 162 684 176 662 180 640 176 612 182 592 172 572 164 552 168 528 170 514 182 520 212 506 206 494 206 498 184 484 176 468 156 466 142 472 132 466 118zM508 96l8-18 20-12-2 6-14 10-6 16zM572 40l14 2 16 8-4 6-18-6zM672 54l28 0-4 5-16 0zM486 47l12 0-2 5-8 0zM738 162l5 8 4 16-6-10zM22 80l6-6 4 12 6 6-8 10-8-6zM32 64l6 0-2 4-4 0zM448 165l7 0 0 3-7 0z" fill="#2f5fc8"/>
          <path d="M48 96L60 84 80 75 108 86 92 130 80 124 68 126 58 130 50 136 40 134 50 124 38 122 46 112 56 106 46 102zM26 146l20-8-10 6zM92 130l8 8 6 18-6-10zM112 180l80 2 10 8-2 14 12-2 26-12 2 6-16 10-10 14-14 8-4 14 2 14-6-4-4-14-22 2-8 4-8 8-8-10-20-2-20-14-4-20 4-18z" fill="#93d3ec"/>
        </svg>
        <div class="flex pl-6 h-[64px] text-[14px] text-[#616161]"><span class="pt-[12px] w-[94px]">Russia</span><i class="mt-[22px] h-px w-[6px] bg-[#dadce0]"></i><i class="w-[148px] h-full bg-[#4285f4]"></i><i class="ml-[9px] w-px h-full bg-[#dadce0]"></i></div>
      </section>

      <section class="w-[320px] bg-white rounded-t-[3px] shadow-[0_0_2px_rgba(0,0,0,.25)] px-6 pt-6">
        <h3 class="h-[34px] text-[14px] leading-[17px] text-[#3c4043] whitespace-nowrap">Количество пользователей по времени<br>суток</h3>
        <div class="flex pl-[2px]">
          <div id="heat" class="grid grid-cols-[repeat(7,30px)] gap-x-[3px] auto-rows-[13.500px]"></div>
          <div class="ml-auto pr-px flex flex-col text-right text-[13px] leading-[27px] font-light text-[#757575] -mt-[9px] tracking-[-0.15px]"><span>12am</span><span>2am</span><span>4am</span><span>6am</span><span>8am</span><span>10am</span><span>12pm</span><span>2pm</span><span>4pm</span></div>
        </div>
      </section>
    </div>
  </main>
  <div class="ml-auto mt-[37px] w-[6px] h-[304px] shrink-0 rounded-l-[3px] bg-[#dadce0] border-l border-[#c4c6ca]"></div>
</div>

<!-- Taskbar -->
<footer class="relative h-10 w-full shrink-0 bg-[linear-gradient(to_bottom,#2a66d4_0,#3f8ae6_2px,#2f74de_5px,#2158d6_7px,#2257d8_50%,#2663e2_94%,#1a45b0_100%)] flex items-center text-white font-['Open_Sans',sans-serif]">
  <svg class="absolute left-0 -top-1 w-[54px] h-11" viewBox="0 1036 54 44"><defs><radialGradient id="o"><stop offset=".6" stop-color="#101010"/><stop offset=".85" stop-color="#050505"/><stop offset="1" stop-color="#000" stop-opacity=".1"/></radialGradient></defs><circle cx="27" cy="1060" r="24" fill="url(#o)"/><g fill="none" stroke-width="2.500"><path d="M8 1056a19 19 0 0 1 14-14" stroke="#f04a3c"/><path d="M32 1042a19 19 0 0 1 14 14" stroke="#45d82e"/><path d="M8 1064a19 19 0 0 0 10 14" stroke="#3aa2ee"/><path d="M46 1064a19 19 0 0 1-10 14" stroke="#f3e23a"/></g><path d="M18 1050c4-2 7-1 10 1l-2 9c-3-2-6-2-10-1z" fill="#f4622a"/><path d="M29 1052c4 2 7 2 11 0l-2 9c-4 2-7 1-11-1z" fill="#8bd03a"/><path d="M16 1061c4-1 7-1 10 1l-2 9c-3-2-6-2-10-1z" fill="#53a8f2"/><path d="M27 1062c4 2 7 2 11 1l-2 8c-4 2-8 2-11 0z" fill="#ffd93a"/></svg>
  <svg class="w-[159px] h-10 shrink-0" viewBox="0 1040 159 40"><circle cx="80.500" cy="1057.500" r="5" fill="none" stroke="#fff" stroke-width="1.300"/><path d="m77 1061.500-6.500 6.500" stroke="#fff" stroke-width="1.500"/><circle cx="131" cy="1060" r="11" fill="#b5b5b5"/><circle cx="131" cy="1060" r="9.500" fill="#626262"/><circle cx="131" cy="1060" r="6.500" fill="#7d7d7d"/><path d="M131 1052c-1 4 4 5 2 10M131 1052v11" fill="none" stroke="#eee" stroke-width="1.300"/><circle cx="129.700" cy="1064" r="1.900" fill="#eee"/></svg>
  <div class="flex gap-[3px] h-[38px] self-start mt-px">
    <div class="w-[50px] border border-[#86a5ea] bg-[#5079dc] flex items-center justify-center"><svg class="size-[22px]" viewBox="0 0 22 22"><circle cx="11" cy="11" r="11" fill="#f2f2f2"/><path d="m5 5 6 7.500L17 5M11 12v7" fill="none" stroke="#d8101c" stroke-width="3"/></svg></div>
    <div class="w-[50px] border border-[#e6edfb] bg-linear-to-b from-[#6d8edb] to-[#90a9e6] flex items-center justify-center"><svg class="size-6" viewBox="0 0 24 24"><circle cx="12" cy="12" r="12" fill="#fbc116"/><path d="M1.600 6A12 12 0 0 1 22.400 6H12a6 6 0 0 0-5.200 9z" fill="#ea4335"/><path d="M1.600 6 6.800 15A6 6 0 0 0 13 18l-2.500 6A12 12 0 0 1 1.600 6z" fill="#2ba24c"/><path d="m11 24 6.200-9A6 6 0 0 0 12 18z" fill="#2ba24c"/><circle cx="12" cy="12" r="6" fill="#fff"/><circle cx="12" cy="12" r="4.700" fill="#3b82f0"/></svg></div>
    <div class="w-[50px] border border-[#86a5ea] bg-[#5079dc] flex items-center justify-center"><svg class="size-6" viewBox="0 0 24 24"><path d="M18 0 0 15.500l2 2.500L18 6z" fill="#0a6cbd"/><path d="M18 24 0 8.500 2 6l16 12z" fill="#0f7fcf"/><path d="m17 0 7 3v18l-7 3z" fill="#27a5ef"/></svg></div>
    <div class="w-[50px] border border-[#86a5ea] bg-[#5079dc] flex items-center justify-center"><svg class="w-[22px] h-[19px]" viewBox="0 0 22 19"><path d="M0 0h9l2 2v4H0z" fill="#e09a06"/><path d="M0 4h8l2-2h12v17H0z" fill="#ffd25a"/><path d="M4 19v-9h14v9h-4v-4.500H8V19z" fill="#3d97dc"/></svg></div>
  </div>
  <div class="ml-auto h-10 w-[274px] shrink-0 border-l border-[#0c2f80] bg-[linear-gradient(to_bottom,#1560c8_0,#25a0f2_2px,#1690ea_6px,#1290ec_50%,#119cf4_95%,#0b62c0_100%)] flex items-center">
    <svg class="w-[123px] h-10" viewBox="1646 1040 123 40" fill="none" stroke="#fff" stroke-width="1.300"><circle cx="1656.500" cy="1060.500" r="9" fill="#2287e8" stroke="#0e3c94" stroke-width="1.500"/><path d="M1649.500 1059a7 7 0 0 1 14 0z" fill="#7cc0f7" stroke="none"/><path d="m1658.500 1056.500-4 4 4 4" stroke-width="2"/><rect x="1677" y="1052" width="7" height="11" rx="1.500" fill="#fff" stroke="none"/><path d="M1675 1061v2.500q0 2 2 2h7q2 0 2-2V1061M1680.500 1066v1.500M1677 1067.500h7"/><circle cx="1705" cy="1060" r="8" fill="#f5e22c" stroke="#c79c10" stroke-width="1"/><path d="M1705 1056.500v8M1701 1060.500h8" stroke="#2a8a1c" stroke-width="3"/><path d="M1726 1054.500h10.500v9H1725v-4M1721.500 1054.500h4v4h-4zM1731 1063.500v3M1726.500 1067h8M1723.500 1058.500v7"/><path d="M1745.500 1058v5h2.500l3.500 3.500v-12L1748 1058zM1754 1058q1.500 2.500 0 5M1756.500 1056q3 4.500 0 9M1759 1054.500q4 6 0 12"/></svg>
    <span class="w-[24px] text-[12px] tracking-[-0.5px] ml-px">ENG</span>
    <div class="w-[78px] text-center text-[12px] leading-[18px] tracking-[-0.6px]">17:00<br>29.03.2023</div>
    <svg class="w-[47px] h-10" viewBox="1873 1040 47 40" fill="none" stroke="#fff" stroke-width="1.300"><path d="M1879.500 1052.500h15v11.500h-5l-2.500 2.800-2.500-2.800h-5z"/><path d="M1915.500 1040v40" stroke="#5c8fb8" stroke-width="1"/></svg>
  </div>
</footer>

<script>
  // Hourly activity: one string per hour, one digit per weekday
  const hours = ['1000000','3020000','3010000','1020000','0010000','0010000','0000000','0010000','0000000','0010000','0000000','0000000','0000000','0000000','0000002','0000000','0000004'];
  const levels = ['bg-[#dadce0]','bg-[#93d3ec]','bg-[#1a73e8]','bg-[#2f5fc8]','bg-[#42a0f5]'];
  document.getElementById('heat').innerHTML = hours.join('').split('').map(d => `<i class="h-[10.500px] ${levels[d]}"></i>`).join('');
</script>
</body>
</html>
